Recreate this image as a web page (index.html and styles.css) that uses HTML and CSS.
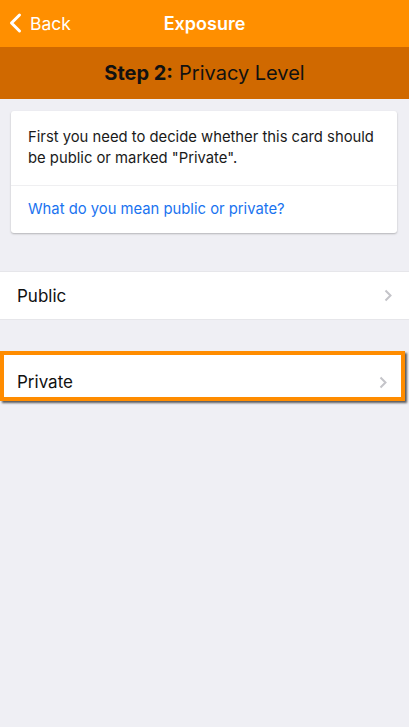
FILE: index.html
```html
<!DOCTYPE html>
<html>
<head>
<meta charset="utf-8">
<link rel="stylesheet" href="styles.css">
</head>
<body>
<div class="navbar">
  <div class="back">
    <svg class="back-icon" width="14" height="22" viewBox="0 0 14 22"><path d="M11.5 3 L3.5 11 L11.5 19" fill="none" stroke="#fff" stroke-width="3" stroke-linecap="round" stroke-linejoin="round"/></svg>
    <span>Back</span>
  </div>
  <div class="title">Exposure</div>
</div>
<div class="stepbar"><b>Step 2:</b> Privacy Level</div>
<div class="card">
  <div class="card-text">First you need to decide whether this card should be public or marked "Private".</div>
  <div class="card-link">What do you mean public or private?</div>
</div>
<div class="row public">
  <span>Public</span>
  <svg class="chev" width="8" height="13" viewBox="0 0 8 13"><path d="M1.5 1.5 L6.5 6.5 L1.5 11.5" fill="none" stroke="#c4c4c9" stroke-width="2"/></svg>
</div>
<div class="highlight">
  <div class="row private">
    <span>Private</span>
    <svg class="chev" width="8" height="13" viewBox="0 0 8 13"><path d="M1.5 1.5 L6.5 6.5 L1.5 11.5" fill="none" stroke="#c4c4c9" stroke-width="2"/></svg>
  </div>
</div>
</body>
</html>
```
FILE: styles.css
```css
html, body { margin: 0; padding: 0; }
body {
  background: #efeff4;
  font-family: Inter, "Noto Sans", "Liberation Sans", sans-serif;
  width: 409px;
  height: 727px;
  overflow: hidden;
}
.navbar {
  height: 47px;
  background: #ff8f00;
  display: flex;
  align-items: center;
  justify-content: center;
  position: relative;
  color: #fff;
}
.back {
  position: absolute;
  left: 8px;
  top: 12px;
  display: flex;
  align-items: center;
  gap: 8px;
  font-size: 17.5px;
}
.back-icon { display: block; }
.title { font-size: 18px; font-weight: 600; }
.stepbar {
  height: 52px;
  background: #d06900;
  display: flex;
  align-items: center;
  justify-content: center;
  font-size: 20px;
  color: #111;
}
.stepbar b { font-weight: 700; margin-right: 6px; }
.card {
  margin: 12px 12px 0 11px;
  background: #fff;
  border-radius: 3px;
  box-shadow: 0 1px 2px rgba(0,0,0,0.25);
}
.card-text {
  padding: 16px 16px 16px 17px;
  font-size: 14.8px;
  line-height: 21px;
  color: #1a1a1a;
  border-bottom: 1px solid #efeff1;
}
.card-link {
  padding: 13px 17px 13px;
  font-size: 14.8px;
  line-height: 21px;
  color: #1a73f0;
}
.row {
  height: 47px;
  background: #fff;
  display: flex;
  align-items: center;
  justify-content: space-between;
  padding: 0 17px 0 17px;
  font-size: 17px;
  color: #111;
}
.public {
  margin-top: 38px;
  border-top: 1px solid #e6e6ea;
  border-bottom: 1px solid #e6e6ea;
}
.highlight {
  margin: 31px 4px 0 0;
  border: 4px solid #ff8c00;
  box-shadow: 2px 2px 2px rgba(40,40,40,0.75), inset 2px 2px 2px rgba(40,40,40,0.75);
}
.private {
  height: 42px;
  box-sizing: border-box;
  padding: 12px 14px 0 13px;
}
.chev { display: block; }
```
